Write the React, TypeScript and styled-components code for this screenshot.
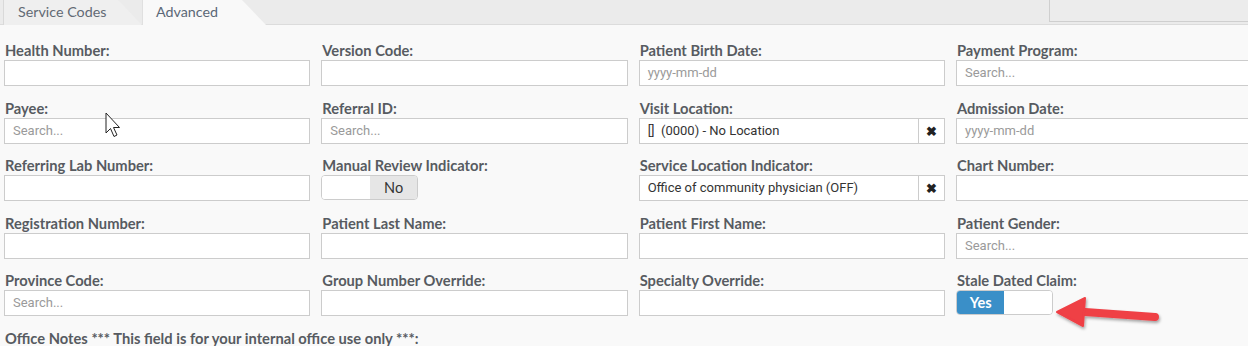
import React from "react";
import styled, { createGlobalStyle } from "styled-components";

const GlobalStyle = createGlobalStyle`
  html, body { margin: 0; padding: 0; background: #f9f9f9; overflow: hidden; }
  body { width: 1248px; height: 346px; font-family: Lato, "Open Sans", sans-serif; }
  * { box-sizing: border-box; }
`;

const Page = styled.div`
  position: relative;
  width: 1248px;
  height: 346px;
  overflow: hidden;
  background: #f9f9f9;
`;

const TabBar = styled.div`
  display: flex;
  align-items: flex-start;
  height: 25px;
  background: #ebebeb;
  border-bottom: 1px solid #dcdcdc;
  padding-left: 3px;
`;

const Tab = styled.div<{ $active?: boolean; $w: number }>`
  position: relative;
  width: ${(p) => p.$w}px;
  height: 25px;
  margin-bottom: -1px;
  padding-left: ${(p) => (p.$active ? 13 : 14)}px;
  font-family: Lato, "Open Sans", sans-serif;
  font-size: 14.3px;
  line-height: 24px;
  color: ${(p) => (p.$active ? "#5b6877" : "#626a74")};
  background: ${(p) => (p.$active ? "#f9f9f9" : "#efefef")};
  border-left: 1px solid ${(p) => (p.$active ? "#e0e0e0" : "#d9d9d9")};
  clip-path: polygon(0 0, calc(100% - 24px) 0, 100% 100%, 0 100%);
`;

const RightBox = styled.div`
  margin-left: auto;
  width: 199px;
  height: 22px;
  background: #ececec;
  border-left: 1px solid #cfcfcf;
  border-bottom: 1px solid #cfcfcf;
`;

const Form = styled.div`
  display: grid;
  grid-template-columns: repeat(4, 306.33px);
  column-gap: 11px;
  row-gap: 11.5px;
  padding: 15px 0 0 4px;
`;

const Field = styled.div<{ $span?: number }>`
  display: flex;
  flex-direction: column;
  grid-column: span ${(p) => p.$span ?? 1};
`;

const Label = styled.div`
  font-family: Lato, "Open Sans", sans-serif;
  font-weight: 700;
  font-size: 14.7px;
  line-height: 20px;
  height: 20px;
  padding-left: 1px;
  color: #575b61;
  white-space: nowrap;
`;

const Input = styled.div<{ $placeholder?: boolean }>`
  height: 26px;
  background: #fff;
  border: 1px solid #cccccc;
  padding: 0 8px;
  font-family: Roboto, "Liberation Sans", sans-serif;
  font-size: 13px;
  line-height: 24px;
  color: ${(p) => (p.$placeholder ? "#9a9a9a" : "#333")};
`;

const SelectBox = styled.div`
  display: flex;
  height: 26px;
  background: #fff;
  border: 1px solid #cccccc;
`;

const SelectValue = styled.div`
  flex: 1;
  padding: 0 8px;
  font-family: Roboto, "Liberation Sans", sans-serif;
  font-size: 13px;
  line-height: 24px;
  color: #333;
  white-space: pre;
`;

const ClearButton = styled.div`
  width: 26px;
  border-left: 1px solid #cccccc;
  display: flex;
  align-items: center;
  justify-content: center;
  font-size: 13px;
  font-weight: 700;
  color: #222;
`;

const Toggle = styled.div`
  display: flex;
  width: 97px;
  height: 25px;
  border: 1px solid #cccccc;
  border-radius: 4px;
  overflow: hidden;
  background: #fff;
`;

const ToggleHalf = styled.div<{ $kind: "on" | "off" | "blank" }>`
  flex: 1;
  display: flex;
  align-items: center;
  justify-content: center;
  font-family: Lato, "Open Sans", sans-serif;
  font-size: 14.5px;
  background: ${(p) => (p.$kind === "on" ? "#3a8fc8" : p.$kind === "off" ? "#e6e6e6" : "#fff")};
  color: ${(p) => (p.$kind === "on" ? "#fff" : "#333")};
  font-weight: ${(p) => (p.$kind === "on" ? 700 : 400)};
`;

const Cursor = styled.svg`
  position: absolute;
  left: 105px;
  top: 112px;
`;

const Arrow = styled.svg`
  position: absolute;
  left: 1052px;
  top: 294px;
  overflow: visible;
`;

type F =
  | { label: string; kind: "input"; placeholder?: string }
  | { label: string; kind: "select"; value: string }
  | { label: string; kind: "toggle"; on: boolean };

const fields: F[] = [
  { label: "Health Number:", kind: "input" },
  { label: "Version Code:", kind: "input" },
  { label: "Patient Birth Date:", kind: "input", placeholder: "yyyy-mm-dd" },
  { label: "Payment Program:", kind: "input", placeholder: "Search..." },
  { label: "Payee:", kind: "input", placeholder: "Search..." },
  { label: "Referral ID:", kind: "input", placeholder: "Search..." },
  { label: "Visit Location:", kind: "select", value: "[]  (0000) - No Location" },
  { label: "Admission Date:", kind: "input", placeholder: "yyyy-mm-dd" },
  { label: "Referring Lab Number:", kind: "input" },
  { label: "Manual Review Indicator:", kind: "toggle", on: false },
  { label: "Service Location Indicator:", kind: "select", value: "Office of community physician (OFF)" },
  { label: "Chart Number:", kind: "input" },
  { label: "Registration Number:", kind: "input" },
  { label: "Patient Last Name:", kind: "input" },
  { label: "Patient First Name:", kind: "input" },
  { label: "Patient Gender:", kind: "input", placeholder: "Search..." },
  { label: "Province Code:", kind: "input", placeholder: "Search..." },
  { label: "Group Number Override:", kind: "input" },
  { label: "Specialty Override:", kind: "input" },
  { label: "Stale Dated Claim:", kind: "toggle", on: true },
];

function Control({ f }: { f: F }) {
  if (f.kind === "input")
    return <Input $placeholder={!!f.placeholder}>{f.placeholder ?? ""}</Input>;
  if (f.kind === "select")
    return (
      <SelectBox>
        <SelectValue>{f.value}</SelectValue>
        <ClearButton>✖</ClearButton>
      </SelectBox>
    );
  return (
    <Toggle>
      {f.on ? (
        <>
          <ToggleHalf $kind="on">Yes</ToggleHalf>
          <ToggleHalf $kind="blank" />
        </>
      ) : (
        <>
          <ToggleHalf $kind="blank" />
          <ToggleHalf $kind="off">No</ToggleHalf>
        </>
      )}
    </Toggle>
  );
}

export default function App() {
  return (
    <Page>
      <GlobalStyle />
      <TabBar>
        <Tab $w={139}>Service Codes</Tab>
        <Tab $w={124} $active>
          Advanced
        </Tab>
        <RightBox />
      </TabBar>
      <Form>
        {fields.map((f) => (
          <Field key={f.label}>
            <Label>{f.label}</Label>
            <Control f={f} />
          </Field>
        ))}
        <Field $span={4}>
          <Label>Office Notes *** This field is for your internal office use only ***:</Label>
        </Field>
      </Form>
      <Cursor width="20" height="28" viewBox="0 0 20 28">
        <path
          d="M1 1 L1 21 L5.5 16.5 L9 24.5 L12 23 L8.5 15.5 L14.5 15.5 Z"
          fill="#fff"
          stroke="#222"
          strokeWidth="1"
          strokeLinejoin="miter"
        />
      </Cursor>
      <Arrow width="110" height="40" viewBox="0 0 110 40">
        <defs>
          <filter id="sh" x="-20%" y="-50%" width="140%" height="200%">
            <feDropShadow dx="1" dy="2" stdDeviation="1.5" floodColor="#000" floodOpacity="0.35" />
          </filter>
        </defs>
        <g filter="url(#sh)">
          <path d="M33 18 L103 23" stroke="#ef3f45" strokeWidth="8" strokeLinecap="round" />
          <path d="M5 18 L33 4 L31 32 Z" fill="#ef3f45" stroke="#ef3f45" strokeWidth="2" strokeLinejoin="round" />
        </g>
      </Arrow>
    </Page>
  );
}
